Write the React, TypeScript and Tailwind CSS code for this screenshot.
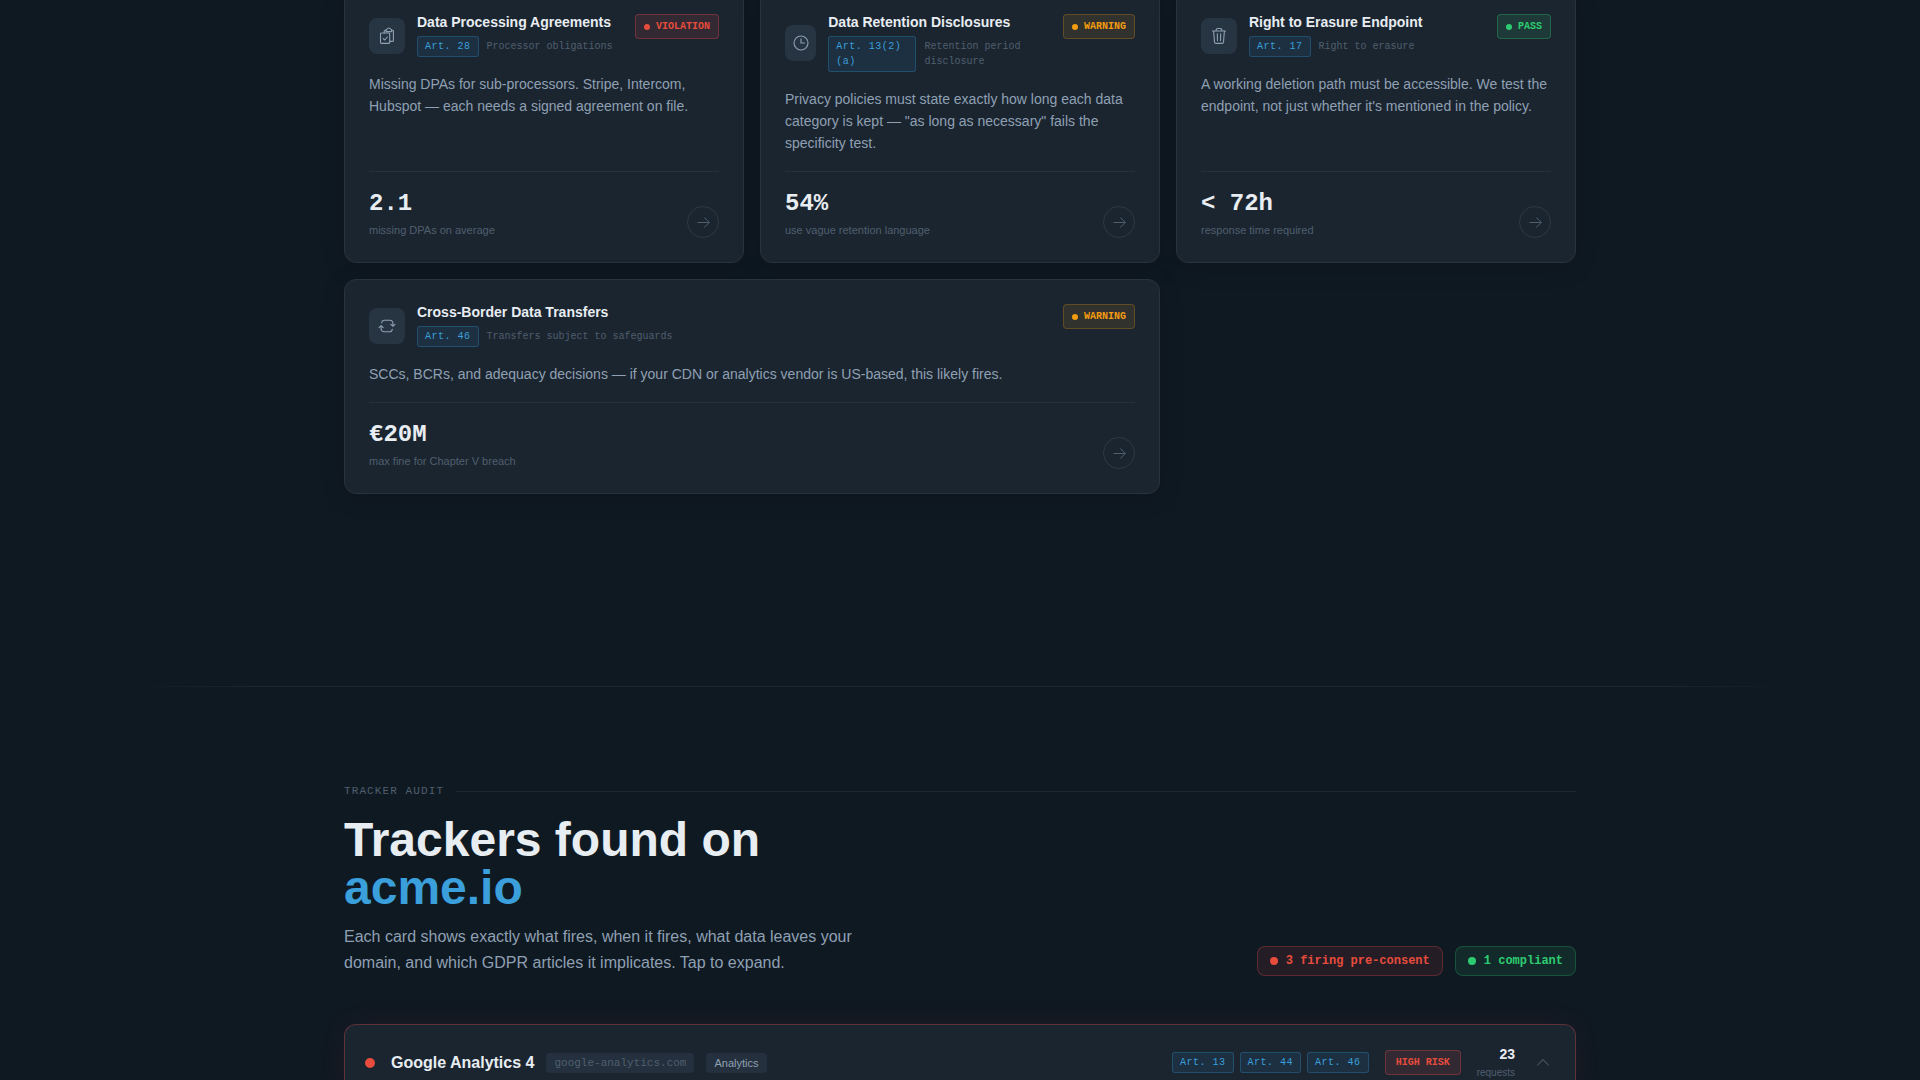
import { PiArrowRightLight, PiCaretUpLight } from 'react-icons/pi';
import { ReactNode } from 'react';
import clsx from 'clsx';

type Status = 'violation' | 'warning' | 'pass';

interface Check {
  title: string;
  article: string;
  subject: string;
  status: Status;
  body: string;
  stat: string;
  statLabel: string;
  icon: ReactNode;
  wide?: boolean;
}

const STATUS_STYLES: Record<Status, string> = {
  violation: 'border-[#e5484d]/35 bg-[#e5484d]/12 text-[#e74c3c]',
  warning: 'border-[#f39c12]/25 bg-[#f39c12]/10 text-[#f39c12]',
  pass: 'border-[#2ecc71]/30 bg-[#2ecc71]/12 text-[#2ecc71]',
};

const Icon = ({ children }: { children: ReactNode }) => (
  <svg
    viewBox="0 0 18 18"
    className="size-[18px] shrink-0"
    fill="none"
    stroke="currentColor"
    strokeWidth="1.1"
    strokeLinecap="round"
    strokeLinejoin="round"
    aria-hidden="true"
  >
    {children}
  </svg>
);

const CHECKS: Check[] = [
  {
    title: 'Data Processing Agreements',
    article: 'Art. 28',
    subject: 'Processor obligations',
    status: 'violation',
    body: 'Missing DPAs for sub-processors. Stripe, Intercom, Hubspot — each needs a signed agreement on file.',
    stat: '2.1',
    statLabel: 'missing DPAs on average',
    icon: (
      <Icon>
        <rect x="2.5" y="6" width="9.2" height="10.4" rx="0.8" />
        <path d="M5.2 11.6l1.500 1.400L9.300 10" />
        <path d="M6.200 6V4.200a1 1 0 0 1 1-1h.8M13.700 3.200h.7a1 1 0 0 1 1 1v9.200a1 1 0 0 1-1 1h-2.700" />
        <path d="M8 4.600V3.200c0-.6.4-.9 1-.9.100-.8.800-1.300 1.800-1.300s1.700.5 1.800 1.300c.7 0 1.100.3 1.100.9v1.400z" />
      </Icon>
    ),
  },
  {
    title: 'Data Retention Disclosures',
    article: 'Art. 13(2)(a)',
    subject: 'Retention period disclosure',
    status: 'warning',
    body: 'Privacy policies must state exactly how long each data category is kept — "as long as necessary" fails the specificity test.',
    stat: '54%',
    statLabel: 'use vague retention language',
    icon: (
      <Icon>
        <circle cx="9" cy="9" r="7" />
        <path d="M9 4.800V9h3.400" />
      </Icon>
    ),
  },
  {
    title: 'Right to Erasure Endpoint',
    article: 'Art. 17',
    subject: 'Right to erasure',
    status: 'pass',
    body: "A working deletion path must be accessible. We test the endpoint, not just whether it's mentioned in the policy.",
    stat: '< 72h',
    statLabel: 'response time required',
    icon: (
      <Icon>
        <path d="M2.500 4h13M6 4c0-1.500.7-2.500 1.700-2.500h2.600c1 0 1.700 1 1.700 2.500M3.600 4l.9 11a1.500 1.500 0 0 0 1.500 1.400h6a1.500 1.500 0 0 0 1.500-1.400l.9-11M7.300 6.800l.2 6.800M10.700 6.800l-.2 6.800" />
      </Icon>
    ),
  },
  {
    title: 'Cross-Border Data Transfers',
    article: 'Art. 46',
    subject: 'Transfers subject to safeguards',
    status: 'warning',
    body: 'SCCs, BCRs, and adequacy decisions — if your CDN or analytics vendor is US-based, this likely fires.',
    stat: '€20M',
    statLabel: 'max fine for Chapter V breach',
    wide: true,
    icon: (
      <Icon>
        <path d="M3.700 5.600C4 4 4.900 3.200 6.300 3.200h5.400c1.900 0 3.200 1.200 3.200 3.100v2.900M12.800 7.400l2.100 1.900L17 7.400" />
        <path d="M14.300 12.400c-.3 1.600-1.200 2.400-2.600 2.400H6.300c-1.900 0-3.200-1.200-3.200-3.100V8.800M1 10.600l2.100-1.900 2.100 1.900" />
      </Icon>
    ),
  },
];

const ArticleTag = ({ children }: { children: ReactNode }) => (
  <span className="rounded-[3px] border border-[#3498db]/30 bg-[#3498db]/10 px-[7px] py-0.5 font-['Liberation_Mono',monospace] text-[10px] leading-[15px] tracking-wider text-[#3a9fdb]">
    {children}
  </span>
);

const CheckCard = ({ check }: { check: Check }) => (
  <article
    className={clsx(
      'flex flex-col rounded-xl border border-[#27333e] bg-[#1b2530] p-6 shadow-[0_4px_24px_rgba(0,0,0,0.15)]',
      check.wide && 'col-span-2'
    )}
  >
    <header className="flex items-start justify-between">
      <div className="flex items-center gap-3">
        <div className="flex h-9 w-9 items-center justify-center rounded-lg bg-[#273442] text-[#8fa0b3]">
          {check.icon}
        </div>
        <div>
          <h3 className="mb-1.5 text-[14px] leading-4 font-bold text-[#e8edf2]">
            {check.title}
          </h3>
          <div className="flex items-start gap-2">
            <ArticleTag>{check.article}</ArticleTag>
            <span className="py-[3px] font-['Liberation_Mono',monospace] text-[10px] leading-[15px] text-[#4f5f6e]">
              {check.subject}
            </span>
          </div>
        </div>
      </div>
      <span
        className={clsx(
          "flex shrink-0 items-center gap-1.5 rounded border px-2 py-1 font-['Liberation_Mono',monospace] text-[10px] leading-[15px] font-bold uppercase",
          STATUS_STYLES[check.status]
        )}
      >
        <span className="size-1.5 rounded-full bg-current" />
        {check.status}
      </span>
    </header>
    <p className="mt-4 mb-[17px] text-[14px] leading-[22px] text-[#8fa0b3]">
      {check.body}
    </p>
    <footer className="mt-auto flex items-end justify-between border-t border-[#25313c] pt-4">
      <div>
        <div className="mb-0.5 font-['Liberation_Mono',monospace] text-2xl leading-8 font-bold text-[#e8edf2]">
          {check.stat}
        </div>
        <div className="text-[11px] leading-4 text-[#4f5f6e]">
          {check.statLabel}
        </div>
      </div>
      <button
        type="button"
        aria-label={check.title}
        className="flex size-8 items-center justify-center rounded-full border border-[#2d3945] text-[#4f5f6e]"
      >
        <PiArrowRightLight size={17} />
      </button>
    </footer>
  </article>
);

export default function App() {
  return (
    <main className="h-screen overflow-hidden bg-[#0f1922] font-['Liberation_Sans',Arial,sans-serif]">
      <section className="mx-auto -mt-[11px] grid max-w-[1232px] grid-cols-3 gap-4">
        {CHECKS.map((check) => (
          <CheckCard key={check.title} check={check} />
        ))}
      </section>

      <div className="mx-32 mt-48 flex h-px">
        <span className="w-1/12 bg-linear-to-r from-transparent to-[#1c2731]" />
        <span className="flex-1 bg-[#1c2731]" />
        <span className="w-1/12 bg-linear-to-l from-transparent to-[#1c2731]" />
      </div>

      <section className="mx-auto mt-24 max-w-[1232px]">
        <div className="flex items-center gap-3 font-['Liberation_Mono',monospace] text-[11px] leading-[17px] tracking-widest text-[#4f5f6e] uppercase">
          Tracker Audit
          <span className="h-px flex-1 bg-[#1c2731]" />
        </div>

        <div className="mt-4 flex items-end justify-between">
          <div>
            <h2 className="text-5xl leading-12 font-bold text-[#e8edf2]">
              Trackers found on
              <br />
              <span className="text-[#3a9fdb]">acme.io</span>
            </h2>
            <p className="mt-3 max-w-[520px] text-base leading-[26px] text-[#8fa0b3]">
              Each card shows exactly what fires, when it fires, what data
              leaves your domain, and which GDPR articles it implicates. Tap to
              expand.
            </p>
          </div>
          <div className="flex gap-3 font-['Liberation_Mono',monospace] text-xs leading-[18px] font-bold">
            <span className="flex items-center gap-2 rounded-lg border border-[#e5484d]/30 bg-[#e5484d]/10 px-3 py-[5px] text-[#e74c3c]">
              <span className="size-2 rounded-full bg-current" />3 firing
              pre-consent
            </span>
            <span className="flex items-center gap-2 rounded-lg border border-[#2ecc71]/25 bg-[#2ecc71]/10 px-3 py-[5px] text-[#2ecc71]">
              <span className="size-2 rounded-full bg-current" />1 compliant
            </span>
          </div>
        </div>

        <article className="mt-12 rounded-xl border border-[#e5484d]/35 bg-[#1b2530] shadow-[0_0_32px_rgba(231,76,60,0.06)]">
          <button
            type="button"
            aria-expanded="true"
            className="flex w-full items-center gap-4 p-5 text-left"
          >
            <span className="size-2.5 rounded-full bg-[#e74c3c]" />
            <span className="flex flex-1 items-center gap-3 text-[11px] leading-4">
              <span className="text-base leading-5 font-bold text-[#e8edf2]">
                Google Analytics 4
              </span>
              <span className="rounded bg-[#24303d] px-2 py-0.5 font-['Liberation_Mono',monospace] text-[#4f5f6e]">
                google-analytics.com
              </span>
              <span className="rounded bg-[#24303d] px-2 py-0.5 text-[#8fa0b3]">
                Analytics
              </span>
            </span>
            <span className="flex gap-1.5">
              <ArticleTag>Art. 13</ArticleTag>
              <ArticleTag>Art. 44</ArticleTag>
              <ArticleTag>Art. 46</ArticleTag>
            </span>
            <span className="rounded border border-[#e5484d]/35 bg-[#e5484d]/12 px-2.5 py-1 font-['Liberation_Mono',monospace] text-[10px] leading-[15px] font-bold text-[#e74c3c]">
              HIGH RISK
            </span>
            <span className="text-right">
              <span className="block text-sm leading-[18px] font-bold text-[#e8edf2]">
                23
              </span>
              <span className="mt-0.5 block text-[10px] leading-[15px] text-[#4f5f6e]">
                requests
              </span>
            </span>
            <span className="flex w-6 justify-center text-[#4f5f6e]">
              <PiCaretUpLight size={18} />
            </span>
          </button>
        </article>
      </section>
    </main>
  );
}
